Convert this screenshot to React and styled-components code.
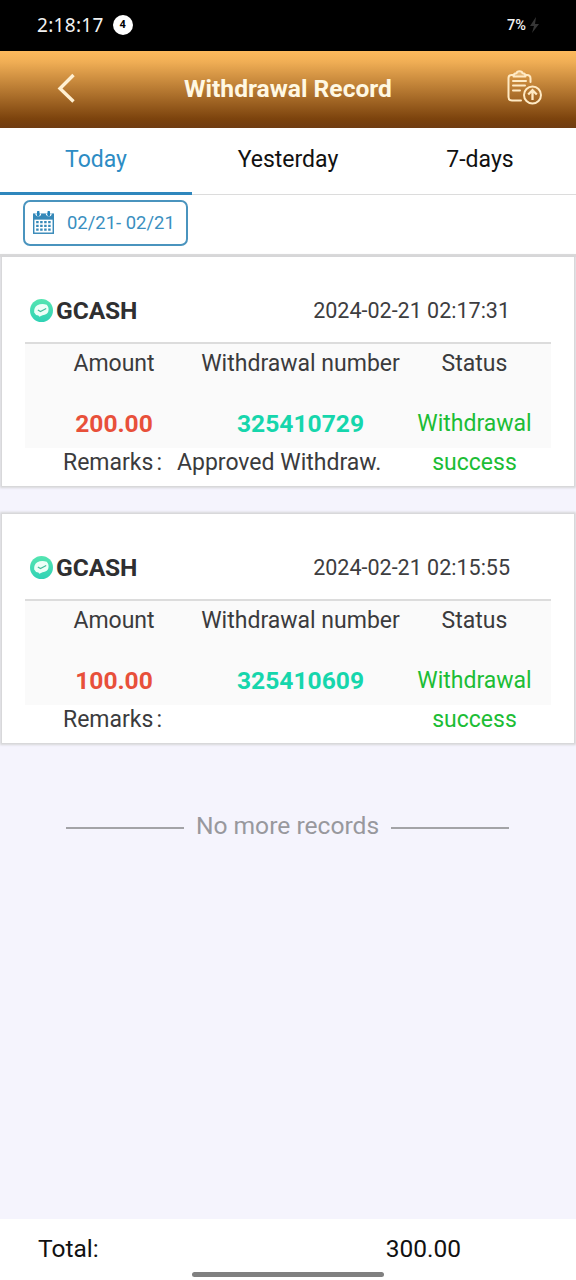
import React, { useState } from 'react';
import styled, { createGlobalStyle } from "styled-components";

const GlobalStyle = createGlobalStyle`
  * {
    box-sizing: border-box;
  }

  body {
    margin: 0;
    font-family: Roboto, "Liberation Sans", sans-serif;
    background: #f5f4fd;
  }
`;

const Page = styled.div`
  display: flex;
  flex-direction: column;
  width: 576px;
  height: 1280px;
  overflow: hidden;
  background: #f5f4fd;
`;

const StatusBar = styled.div`
  display: flex;
  align-items: center;
  flex: none;
  height: 51px;
  padding: 0 36px 2px 37px;
  background: #000;
  color: #f2f2f2;
`;

const Clock = styled.span`
  font-family: "Noto Sans", sans-serif;
  font-size: 19px;
  letter-spacing: 0.3px;
`;

const NoticeCount = styled.span`
  display: flex;
  align-items: center;
  justify-content: center;
  width: 20px;
  height: 20px;
  margin-left: 9px;
  margin-right: auto;
  border-radius: 50%;
  background: #fff;
  color: #000;
  font-size: 11px;
  font-weight: 700;
`;

const Battery = styled.span`
  margin-right: 3px;
  padding-top: 1px;
  font-size: 14.5px;
  font-weight: 500;
`;

const Header = styled.header`
  display: flex;
  align-items: center;
  justify-content: space-between;
  flex: none;
  height: 77px;
  padding: 0 34px 3px 56px;
  background: linear-gradient(#fdb95d 0%, #f0ae55 14%, #7c430d 88%, #6f3c12 100%);
`;

const Title = styled.h1`
  margin: 1px 7px 0 0;
  color: #fff8e3;
  font-size: 24.6px;
  font-weight: 700;
`;

const Tabs = styled.nav`
  display: grid;
  grid-template-columns: repeat(3, 1fr);
  flex: none;
  height: 67px;
  background: #fff;
`;

const Tab = styled.button`
  padding: 0 0 ${(props) => (props.$active ? "2px" : "4px")};
  border: 0;
  border-bottom: ${(props) => (props.$active ? "3px solid #2f87bd" : "1px solid #dcdcdc")};
  background: none;
  color: ${(props) => (props.$active ? "#2d8cc4" : "#111")};
  font: inherit;
  font-size: 23px;
`;

const Filter = styled.div`
  flex: none;
  height: 62px;
  padding: 5px 23px 0;
  border-bottom: 3px solid #dadada;
  background: #fff;
`;

const DateButton = styled.button`
  display: flex;
  align-items: center;
  gap: 13px;
  width: 165px;
  height: 46px;
  padding: 0 0 1px 8px;
  border: 2px solid #4a94be;
  border-radius: 7px;
  background: #fff;
  color: #3a8fc0;
  font: inherit;
  font-size: 18.45px;
  white-space: nowrap;
`;

const Records = styled.main`
  display: flex;
  flex-direction: column;
  gap: 28px;
  flex: 1;
  padding: 0 2px;
`;

const Card = styled.section`
  height: 229px;
  padding: 23px 23px 0;
  background: #fff;
  box-shadow: 0 0 2px 2px #d6d6d8;
`;

const CardHead = styled.div`
  display: flex;
  align-items: center;
  height: 64px;
  padding: 0 41px 1px 5px;
  border-bottom: 2px solid #dcdcdc;
`;

const Method = styled.span`
  margin-left: 3px;
  margin-right: auto;
  color: #2f2f31;
  font-size: 24.6px;
  font-weight: 700;
  letter-spacing: -0.1px;
`;

const Time = styled.span`
  color: #3d3d3f;
  font-size: 21.5px;
`;

const Details = styled.div`
  display: grid;
  grid-template-columns: 178px 195px 153px;
  grid-template-rows: 38px 38px;
  row-gap: 22px;
  justify-items: center;
  height: 104px;
  padding-top: 1px;
  background: #fafafa;
  font-size: 23px;
  line-height: 38.5px;
`;

const Label = styled.span`
  color: #3b3b3d;
  white-space: nowrap;
`;

const Value = styled.span`
  color: ${(props) => props.$color};
  font-size: ${(props) => (props.$bold ? "24.6px" : "23px")};
  font-weight: ${(props) => (props.$bold ? 700 : 400)};
  text-align: center;
`;

const Remarks = styled.div`
  display: flex;
  padding-left: 38px;
  color: #3b3b3d;
  font-size: 23px;
  line-height: 29px;
`;

const RemarkLabel = styled.span`
  display: flex;
  gap: 3px;
  width: 114px;
`;

const EndOfList = styled.div`
  display: flex;
  align-items: center;
  justify-content: center;
  gap: 12px;
  margin-top: 38px;
  padding-right: 1px;
  color: #98989d;
  font-size: 24.6px;
  line-height: 34px;
`;

const Rule = styled.span`
  width: 118px;
  height: 2px;
  margin-top: 3px;
  background: #a3a3a7;
`;

const Footer = styled.footer`
  display: flex;
  flex-direction: column;
  flex: none;
  height: 61px;
  background: #fff;
`;

const Totals = styled.div`
  display: flex;
  justify-content: space-between;
  height: 53px;
  padding: 0 115px 0 38px;
  color: #111;
  font-size: 24.5px;
  line-height: 60px;
`;

const HomeBar = styled.div`
  flex: none;
  align-self: center;
  width: 192px;
  height: 5px;
  border-radius: 3px;
  background: #808080;
`;

const BoltIcon = () => (
  <svg width="11" height="18" viewBox="0 0 11 18">
    <path d="M7 1 1 10h4l-2 7 7-9H6z" fill="#363636" />
  </svg>
);

const BackIcon = () => (
  <svg width="20" height="32" viewBox="0 0 20 32">
    <path d="M17.500 3 4 16.500l13.500 13" fill="none" stroke="#fff0d2" strokeWidth="3.400" />
  </svg>
);

const ReportIcon = () => (
  <svg width="35" height="36" viewBox="0 0 35 36" fill="none" stroke="#ffeac4" strokeWidth="2">
    <path d="M6 5H4.500Q1.500 5 1.500 8V27Q1.500 30.500 5 30.500H14" strokeLinecap="round" />
    <path d="M19 5H20Q23.500 5 23.500 8.500V12" strokeLinecap="round" />
    <path d="M6.500 6.500C6.500 3.500 8 3.200 9.500 3.200C10 .5 15 .5 15.500 3.200C17 3.200 18.500 3.500 18.500 6.500Z" fill="#ffeac4" fillOpacity=".35" strokeLinejoin="round" />
    <path d="M6 11H19M6 15.500H18M6 20.500H13" strokeLinecap="round" />
    <circle cx="25.500" cy="25" r="8.500" />
    <path d="M25.500 30V20.500M21.200 24.500l4.300-4.300 4.300 4.300" strokeWidth="2.300" />
  </svg>
);

const CalendarIcon = () => (
  <svg width="21" height="23" viewBox="0 0 22 24">
    <path d="M0 2.500h22v21.500H0z" fill="#3789b8" />
    <path d="M1.500 9h19v13.500H1.500z" fill="#fff" />
    <path d="M3 2.500a2.500 2.500 0 0 0 5 0M14 2.500a2.500 2.500 0 0 0 5 0" fill="none" stroke="#fff" strokeWidth="1.200" />
    <path d="M5.500 1v3.500M16.500 1v3.500" stroke="#2383bb" strokeWidth="2.600" strokeLinecap="round" />
    <path
      d="M3.300 11.500h15.500M3.300 15.500h15.500M3.300 19.500h15.500"
      stroke="#3789b8"
      strokeWidth="2.400"
      strokeDasharray="2.600 1.600"
    />
  </svg>
);

const WalletIcon = () => (
  <svg width="23" height="23" viewBox="0 0 22 22">
    <defs>
      <linearGradient id="wallet" x1="0" y1="0" x2="0" y2="1">
        <stop offset="0" stopColor="#55e5b1" />
        <stop offset="1" stopColor="#30d2b5" />
      </linearGradient>
    </defs>
    <circle cx="11" cy="11" r="11" fill="url(#wallet)" />
    <path d="M7 6Q11 4 16 5.500Q18.500 8 17.500 12Q16.500 15 12 15.500L9 17L8 15.800Q5 15.500 4 13Q3.500 8 7 6Z" fill="#edfff8" />
    <path d="M7.500 10.500l2.500 1.500 5.500-3" fill="none" stroke="#42bd9c" strokeWidth="1.100" />
  </svg>
);

const tabs = ["Today", "Yesterday", "7-days"];

const records = [
  { number: "325410729", amount: 200, time: "2024-02-21 02:17:31", remarks: "Approved Withdraw." },
  { number: "325410609", amount: 100, time: "2024-02-21 02:15:55", remarks: "" }
];

const Record = (props) => {
  return (
    <Card>
      <CardHead>
        <WalletIcon />
        <Method>GCASH</Method>
        <Time>{props.time}</Time>
      </CardHead>
      <Details>
        <Label>Amount</Label>
        <Label>Withdrawal number</Label>
        <Label>Status</Label>
        <Value $bold $color="#e8503a">{props.amount.toFixed(2)}</Value>
        <Value $bold $color="#16d6ac">{props.number}</Value>
        <Value $color="#1cbd35">Withdrawal success</Value>
      </Details>
      <Remarks>
        <RemarkLabel>
          <span>Remarks</span>
          <span>:</span>
        </RemarkLabel>
        <span>{props.remarks}</span>
      </Remarks>
    </Card>
  );
};

const App = () => {
  const [activeTab, setActiveTab] = useState("Today");
  const total = records.reduce((sum, record) => sum + record.amount, 0);

  return (
    <Page>
      <GlobalStyle />
      <StatusBar>
        <Clock>2:18:17</Clock>
        <NoticeCount>4</NoticeCount>
        <Battery>7%</Battery>
        <BoltIcon />
      </StatusBar>
      <Header>
        <BackIcon />
        <Title>Withdrawal Record</Title>
        <ReportIcon />
      </Header>
      <Tabs>
        {tabs.map((tab) => (
          <Tab key={tab} $active={tab === activeTab} onClick={() => setActiveTab(tab)}>
            {tab}
          </Tab>
        ))}
      </Tabs>
      <Filter>
        <DateButton>
          <CalendarIcon />
          <span>02/21- 02/21</span>
        </DateButton>
      </Filter>
      <Records>
        {records.map((record) => (
          <Record key={record.number} {...record} />
        ))}
        <EndOfList>
          <Rule />
          <span>No more records</span>
          <Rule />
        </EndOfList>
      </Records>
      <Footer>
        <Totals>
          <span>Total:</span>
          <span>{total.toFixed(2)}</span>
        </Totals>
        <HomeBar />
      </Footer>
    </Page>
  );
};

export default App;
